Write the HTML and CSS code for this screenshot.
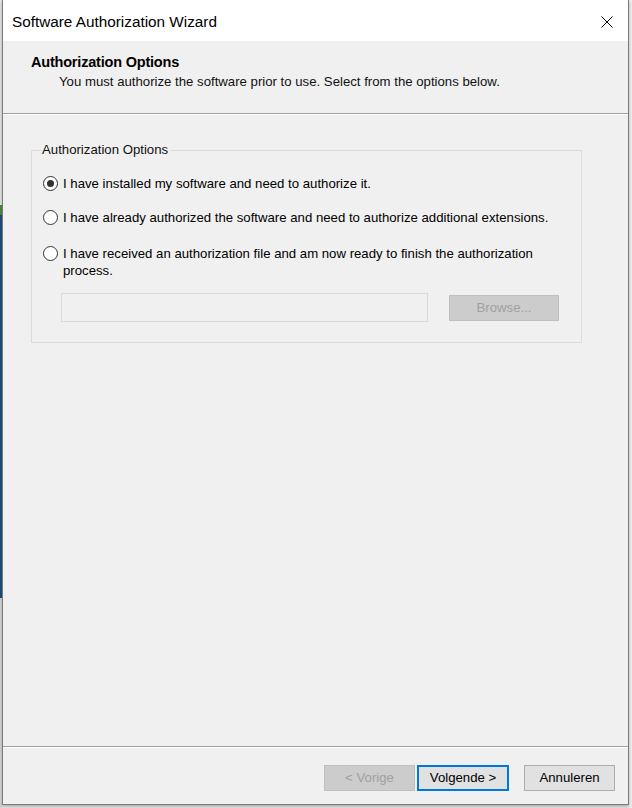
FILE: index.html
```html
<!DOCTYPE html>
<html lang="en">
<head>
    <meta charset="UTF-8">
    <title>Software Authorization Wizard</title>
    <link rel="stylesheet" href="styles.css">
</head>
<body>
    <div class="desktop">
        <!-- Wizard window -->
        <div class="window">
            <div class="titlebar">
                <span class="title">Software Authorization Wizard</span>
                <span class="close-btn">
                    <svg width="12" height="12" viewBox="0 0 12 12">
                        <path d="M0.5 0.5 L11.5 11.5 M11.5 0.5 L0.5 11.5" stroke="#000" stroke-width="1" fill="none"/>
                    </svg>
                </span>
            </div>

            <!-- page header -->
            <div class="wizard-header">
                <div class="header-title">Authorization Options</div>
                <div class="header-sub">You must authorize the software prior to use. Select from the options below.</div>
            </div>
            <div class="etched"></div>

            <!-- page content -->
            <div class="wizard-body">
                <fieldset class="group">
                    <legend>Authorization Options</legend>

                    <label class="option">
                        <span class="radio checked"></span>
                        <span class="option-text">I have installed my software and need to authorize it.</span>
                    </label>
                    <label class="option">
                        <span class="radio"></span>
                        <span class="option-text">I have already authorized the software and need to authorize additional extensions.</span>
                    </label>
                    <label class="option">
                        <span class="radio"></span>
                        <span class="option-text">I have received an authorization file and am now ready to finish the authorization process.</span>
                    </label>

                    <div class="file-row">
                        <div class="file-input"></div>
                        <div class="btn disabled browse">Browse...</div>
                    </div>
                </fieldset>
            </div>

            <div class="etched"></div>

            <!-- buttons -->
            <div class="wizard-footer">
                <div class="btn disabled">&lt; Vorige</div>
                <div class="btn default">Volgende &gt;</div>
                <div class="btn cancel">Annuleren</div>
            </div>
        </div>
    </div>
</body>
</html>
```

FILE: styles.css
```css
/* ====== Base ====== */
* {
    box-sizing: border-box;
    margin: 0;
    padding: 0;
}

body {
    font-family: "Liberation Sans", Arial, sans-serif;
    font-size: 13.2px;
    color: #000;
    width: 632px;
    height: 808px;
    overflow: hidden;
    background-color: #ededed;
    /* strip of desktop showing at the left edge */
    background-image: linear-gradient(to bottom, #e4e4e4 0, #e4e4e4 205px, #4a8a3c 205px, #4a8a3c 215px, #1c4f7c 215px, #1c4f7c 598px, #d4d4d4 598px);
    background-size: 2px 100%;
    background-repeat: no-repeat;
}

.desktop {
    height: 808px;
    padding-left: 2px;
    padding-right: 3px;
}

/* ====== Window frame ====== */
.window {
    width: 627px;
    height: 805px;
    background-color: #f0f0f0;
    border: 1px solid #7a7a7a;
    border-top: none;
    display: flex;
    flex-direction: column;
    box-shadow: 0 2px 3px rgba(0, 0, 0, 0.25);
}

.titlebar {
    height: 41px;
    background-color: #fff;
    display: flex;
    align-items: center;
    justify-content: space-between;
    padding: 2px 15px 0 9px;
}

.title {
    font-size: 15.3px;
}

.close-btn {
    display: flex;
}

/* ====== Header ====== */
.wizard-header {
    height: 72px;
    padding: 13px 0 0 28px;
}

.header-title {
    font-size: 14.5px;
    font-weight: bold;
    letter-spacing: -0.2px;
    line-height: 17px;
}

.header-sub {
    padding-left: 28px;
    margin-top: 2px;
    line-height: 17px;
    color: #111;
}

.etched {
    height: 2px;
    border-top: 1px solid #a0a0a0;
    border-bottom: 1px solid #fff;
}

/* ====== Body ====== */
.wizard-body {
    flex: 1;
    padding: 28px 0 0 28px;
}

.group {
    width: 551px;
    height: 200px;
    border: 1px solid #dcdcdc;
    padding: 18px 0 0 11px;
}

.group legend {
    margin-left: -1px;
    padding: 0 3px 0 0;
    line-height: 14px;
    color: #111;
}

.option {
    display: flex;
    align-items: flex-start;
    gap: 5px;
    width: 530px;
    line-height: 17px;
    margin-bottom: 17px;
}

.option:nth-of-type(2) {
    margin-bottom: 19px;
}

.option:nth-of-type(3) {
    margin-bottom: 0;
}

.radio {
    flex: none;
    width: 15px;
    height: 15px;
    margin-top: 1px;
    border: 1px solid #333;
    border-radius: 50%;
    background-color: #fff;
    display: flex;
    align-items: center;
    justify-content: center;
}

.radio.checked::after {
    content: '';
    width: 7px;
    height: 7px;
    border-radius: 50%;
    background-color: #333;
}

.file-row {
    display: flex;
    align-items: center;
    padding: 14px 0 0 18px;
    gap: 21px;
}

.file-input {
    width: 367px;
    height: 29px;
    border: 1px solid #d9d9d9;
    background-color: #f0f0f0;
}

/* ====== Buttons ====== */
.btn {
    height: 26px;
    display: flex;
    align-items: center;
    justify-content: center;
    border: 1px solid #adadad;
    background-color: #e1e1e1;
    padding-bottom: 1px;
}

.btn.disabled {
    background-color: #cccccc;
    border-color: #bfbfbf;
    color: #a0a0a0;
}

.browse {
    width: 110px;
}

.btn.default {
    border: 2px solid #0078d7;
}

.wizard-footer {
    height: 56px;
    display: flex;
    justify-content: flex-end;
    padding: 17px 13px 0 0;
    gap: 2px;
}

.wizard-footer .btn {
    width: 91px;
}

.wizard-footer .btn.default {
    width: 92px;
}

.wizard-footer .cancel {
    margin-left: 13px;
}
```
